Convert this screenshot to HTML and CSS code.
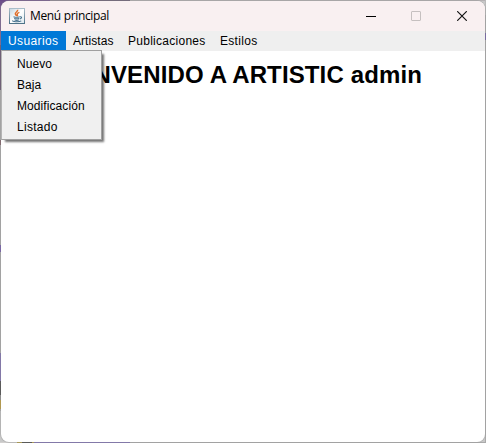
FILE: index.html
```html
<!DOCTYPE html>
<html lang="es">
<head>
<meta charset="utf-8">
<title>Menú principal</title>
<link rel="stylesheet" href="styles.css">
</head>
<body>
<div class="window">
  <header class="titlebar">
    <svg class="app-icon" width="16" height="16" viewBox="0 0 16 16">
      <defs>
        <linearGradient id="tile" x1="0" y1="0" x2="0" y2="1"><stop offset="0" stop-color="#a9bdc9"/><stop offset="1" stop-color="#4f7388"/></linearGradient>
        <linearGradient id="face" x1="0" y1="0" x2="1" y2="1"><stop offset="0" stop-color="#c3d5df"/><stop offset=".5" stop-color="#fff"/><stop offset="1" stop-color="#dce8ee"/></linearGradient>
      </defs>
      <rect x=".5" y=".5" width="15" height="15" fill="url(#face)" stroke="url(#tile)"/>
      <path d="M8.6 1.8C9.3 3.6 5.6 4.3 6.3 6c.3.8 1.2 1.2 1 2.2M10.4 4.3C8.3 5.2 7.8 5.9 8.4 6.8c.3.6.2 1-.2 1.5" fill="none" stroke="#e0702c" stroke-width="1.4"/>
      <path d="M4.5 8.7c1.5.6 4.500.6 6.200 0M5.200 10.400c1.500.5 3.500.5 5 0M5.600 12c1.300.4 3 .4 4.200 0M10.900 8.800c2.400-.5 2 1.700-.1 2.200M3.700 12.500c-1.200 1.400 6.500 1.700 8.600.4" fill="none" stroke="#47718d" stroke-width="1.1"/>
    </svg>
    <span class="title">Menú principal</span>
    <div class="controls">
      <svg width="10" height="10" viewBox="0 0 10 10" overflow="visible"><path d="M1 5.500H11" stroke="#000"/></svg>
      <svg width="10" height="10" viewBox="0 0 10 10"><rect x=".5" y=".5" width="9" height="9" rx=".5" fill="none" stroke="#c6c0c0"/></svg>
      <svg width="10" height="10" viewBox="0 0 10 10"><path d="M.2.2 9.800 9.800M9.800.2.2 9.800" stroke="#111" stroke-width="1.150"/></svg>
    </div>
  </header>
  <nav class="menubar">
    <div class="menu active">Usuarios
      <ul class="dropdown">
        <li>Nuevo</li>
        <li>Baja</li>
        <li>Modificación</li>
        <li class="wide">Listado</li>
      </ul>
    </div>
    <div class="menu artists">Artistas</div>
    <div class="menu posts">Publicaciones</div>
    <div class="menu genres">Estilos</div>
  </nav>
  <main class="content"><h1>BIENVENIDO A ARTISTIC admin</h1></main>
</div>
</body>
</html>
```
FILE: styles.css
```css
* { box-sizing: border-box; }
html, body { height: 100%; }
body {
  margin: 0;
  padding: 1px;
  overflow: hidden;
  font-family: "Liberation Sans", Arial, sans-serif;
  color: #000;
  background:
    linear-gradient(90deg, #d2d0cf 17px, #b39a2c 17px 22px, #333 22px 32px, #b39a2c 32px 34px, #7767b4 34px 130px, #aaa 130px) 0 442px / 486px 1px no-repeat,
    linear-gradient(#bbb 15px, #aaa 15px 33px, #6550a5 33px 40px, #aaa 40px) 485px 0 / 1px 443px no-repeat,
    linear-gradient(90deg, #6b4a88 50px, #8a8090 50px 90px, #60506c 90px 130px, #b5b1b3 130px) 0 0 / 486px 1px no-repeat,
    linear-gradient(#70508c 45px, #543c62 45px 90px, #aaa 90px 140px, #754e58 140px 145px, #aaa 145px 245px, #6748ac 245px 252px, #aaa 252px 353px, #7565b3 353px 381px, #333 381px 395px, #888 395px 400px, #c39b22 400px 409px, #aaa 409px 411px, #c9c9c9 411px) 0 0 / 8px 443px no-repeat,
    #c9c9c9;
}
.window {
  height: 441px;
  width: 484px;
  display: flex;
  flex-direction: column;
  background: #fff;
  border-radius: 8px;
  box-shadow: 0 0 0 1px rgba(150, 150, 150, .4);
}
.titlebar {
  height: 30px;
  display: flex;
  align-items: center;
  padding: 0 18px 0 8px;
  background: #f9f0f1;
  border-radius: 8px 8px 0 0;
}
.title {
  margin-left: 5px;
  font: 12px/16px "Open Sans", "Segoe UI", sans-serif;
  letter-spacing: -.34px;
}
.controls { display: flex; gap: 36px; margin-left: auto; }
.controls svg { display: block; }
.menubar {
  height: 20px;
  display: flex;
  background: #efefef;
  font-size: 12px;
  line-height: 20px;
}
.menu { position: relative; padding: 0 7px; white-space: nowrap; }
.active { width: 65px; color: #fff; background: #0078d7; letter-spacing: .38px; }
.artists { width: 55px; letter-spacing: .06px; }
.posts { width: 92px; letter-spacing: .27px; }
.genres { letter-spacing: .3px; }
.dropdown {
  position: absolute;
  left: 0;
  top: 19px;
  width: 101px;
  height: 90px;
  margin: 0;
  padding: 3px 0 0 15px;
  list-style: none;
  color: #000;
  letter-spacing: .08px;
  background: #f0f0f0;
  border: 1px solid #a0a0a0;
  border-left-color: #b4b4b4;
  box-shadow: 3px 3px 2px -1px rgba(0, 0, 0, .55);
}
.dropdown li { height: 21px; line-height: 21px; }
.dropdown .wide { letter-spacing: .3px; }
.content { flex: 1; display: flex; justify-content: flex-end; padding-right: 63px; }
h1 { margin: 10px 0 0; font-size: 24px; line-height: 28px; letter-spacing: .13px; white-space: nowrap; }
```
